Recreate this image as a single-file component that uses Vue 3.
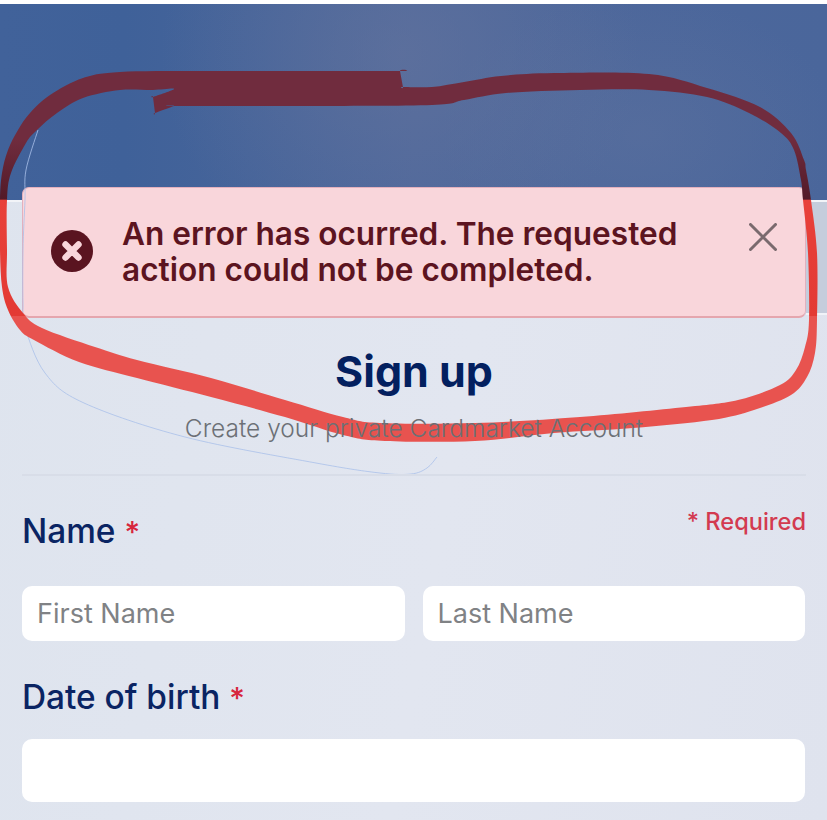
<script setup>
const outer = [[400,71],[400,71],[300,71],[200,71],[120,72],[83,78],[50,95],[30,113],[18,130],[8,150],[2,173],[0,200],[0,250],[2,287],[8,310],[20,330],[34,340],[79,362],[137,378],[211,397],[285,417],[343,435],[385,441],[475,441],[554,433],[633,428],[712,420],[754,410],[791,395],[807,377],[815,353],[817,320],[817,253],[811,200],[806,170],[804,160],[791,133],[760,107],[707,88],[649,74],[554,73],[501,76],[464,82],[432,87],[403,87],[403,87]]
const inner = [[174,89],[153,90],[120,90],[83,98],[57,113],[37,130],[26,143],[11,173],[7,200],[7,250],[8,287],[23,313],[42,328],[95,347],[137,360],[211,378],[285,400],[343,417],[380,423],[475,423],[580,417],[686,407],[738,400],[780,385],[796,370],[805,347],[809,320],[808,253],[803,200],[801,180],[794,150],[781,133],[749,113],[707,97],[649,90],[580,90],[506,93],[464,100],[432,105],[300,106],[174,106],[174,106],[155,113],[155,113],[153,97],[153,97]]
const line = [[38,130],[26,170],[25,200],[23,250],[23,303],[25,327],[45,373],[84,403],[185,437],[316,463],[380,473],[411,474],[427,468],[437,457]]

function smooth(p, closed) {
  const n = p.length
  const at = (i) => closed ? p[(i + n) % n] : p[Math.max(0, Math.min(n - 1, i))]
  let d = `M${p[0][0]} ${p[0][1]}`
  const last = closed ? n : n - 1
  for (let i = 0; i < last; i++) {
    const [a, b, c, e] = [at(i - 1), at(i), at(i + 1), at(i + 2)]
    const c1 = [b[0] + (c[0] - a[0]) / 6, b[1] + (c[1] - a[1]) / 6]
    const c2 = [c[0] - (e[0] - b[0]) / 6, c[1] - (e[1] - b[1]) / 6]
    d += `C${c1[0].toFixed(1)} ${c1[1].toFixed(1)} ${c2[0].toFixed(1)} ${c2[1].toFixed(1)} ${c[0]} ${c[1]}`
  }
  return closed ? d + 'Z' : d
}
const brushPath = smooth(outer, true) + smooth(inner, true)
const penPath = smooth(line, false)
</script>

<template>
  <main class="page">
    <header class="hero"></header>
    <div class="side-shade"></div>

    <section class="alert" role="alert">
      <svg class="alert-icon" viewBox="0 0 42 42" aria-hidden="true">
        <circle cx="21" cy="21" r="21" fill="#5a1420" />
        <path d="M14.5 14.5 27.5 27.5M27.5 14.5 14.5 27.5" stroke="#f9d6db" stroke-width="6.4" stroke-linecap="round" />
      </svg>
      <p class="alert-text">An error has ocurred. The requested action could not be completed.</p>
      <button class="alert-close" aria-label="Close">
        <svg viewBox="0 0 28 28" aria-hidden="true">
          <path d="M1.5 1.5 26.5 26.5M26.5 1.5 1.5 26.5" stroke="#7a6a6e" stroke-width="3" stroke-linecap="round" />
        </svg>
      </button>
    </section>

    <section class="intro">
      <h1 class="title">Sign up</h1>
      <p class="subtitle">Create your private Cardmarket Account</p>
    </section>

    <form class="form" @submit.prevent>
      <div class="label-row">
        <label class="label">Name <span class="star">*</span></label>
        <span class="required">* Required</span>
      </div>
      <div class="name-row">
        <input class="field" type="text" placeholder="First Name" />
        <input class="field" type="text" placeholder="Last Name" />
      </div>
      <label class="label dob-label">Date of birth <span class="star">*</span></label>
      <input class="field dob" type="text" />
    </form>

    <svg class="scribble" viewBox="0 0 827 820" aria-hidden="true">
      <defs>
        <linearGradient id="brush" gradientUnits="userSpaceOnUse" x1="0" y1="0" x2="0" y2="820">
          <stop offset="0.17" stop-color="#702c3e" />
          <stop offset="0.243" stop-color="#521a28" />
          <stop offset="0.2439" stop-color="#e8413a" />
          <stop offset="0.385" stop-color="#e33a34" />
          <stop offset="0.386" stop-color="#e8534f" />
        </linearGradient>
      </defs>
      <path class="pen" :d="penPath" fill="none" />
      <path class="brush" :d="brushPath" fill="url(#brush)" fill-rule="evenodd" />
    </svg>
  </main>
</template>

<style scoped>
.page {
  position: relative;
  width: 827px;
  height: 820px;
  overflow: hidden;
  padding-top: 4px;
  box-sizing: border-box;
  background: linear-gradient(100deg, #dee4ee 0%, #e2e6f0 55%, #dfe3ee 100%);
  background-clip: content-box;
  font-family: Inter, "Liberation Sans", sans-serif;
}
.hero {
  height: 196px;
  border-bottom: 2px solid #f2f4f8;
  background:
    radial-gradient(ellipse 240px 220px at 400px 50px, rgba(104, 118, 158, 0.5), rgba(104, 118, 158, 0) 100%),
    radial-gradient(ellipse 200px 140px at 640px 130px, rgba(100, 118, 160, 0.35), rgba(100, 118, 160, 0) 100%),
    linear-gradient(90deg, #41629a 0%, #3f6199 15%, #4f689b 50%, #4a669b 100%);
}
.side-shade {
  position: absolute;
  top: 202px;
  right: 0;
  width: 21px;
  height: 111px;
  background: #c5cddc;
  border-bottom: 2px solid #f0f3f8;
}
.alert {
  position: relative;
  box-sizing: border-box;
  display: flex;
  align-items: flex-start;
  height: 131px;
  margin: -15px 21px 0 22px;
  padding: 28px 28px 0 28px;
  border: 1px solid #e3b0bd;
  border-bottom: 2px solid #e5a6ae;
  border-radius: 7px;
  background: #f9d6db;
}
.alert-icon {
  flex: none;
  width: 42px;
  height: 42px;
  margin-top: 14px;
}
.alert-text {
  flex: 1;
  margin: 0 0 0 29px;
  font-size: 31.6px;
  line-height: 36px;
  font-weight: 600;
  color: #5c1420;
}
.alert-close {
  flex: none;
  width: 28px;
  height: 28px;
  padding: 0;
  margin: 7px 0 0 0;
  border: 0;
  background: none;
}
.alert-close svg {
  display: block;
  width: 28px;
  height: 28px;
}
.intro {
  position: relative;
  z-index: 3;
  margin: 0 21px 0 22px;
  padding-bottom: 31px;
  border-bottom: 2px solid #d8dde8;
  text-align: center;
}
.title {
  margin: 25px 0 0;
  font-size: 43px;
  line-height: 56px;
  font-weight: 700;
  color: #03205f;
}
.subtitle {
  margin: 14px 0 0;
  font-size: 24.5px;
  line-height: 30px;
  font-weight: 300;
  color: #6c7076;
}
.form {
  margin: 0 22px;
}
.label-row {
  display: flex;
  justify-content: space-between;
  align-items: flex-start;
  margin-top: 33px;
}
.label {
  display: block;
  font-size: 33.4px;
  line-height: 44px;
  font-weight: 500;
  color: #0a2463;
}
.star {
  font-size: 30px;
  color: #d7263d;
}
.required {
  margin-top: -1px;
  margin-right: -1px;
  font-size: 23.6px;
  line-height: 28px;
  font-weight: 500;
  color: #d33a50;
}
.name-row {
  display: grid;
  grid-template-columns: 1fr 1fr;
  gap: 18px;
  margin-top: 32px;
}
.field {
  display: block;
  box-sizing: border-box;
  width: 100%;
  height: 55px;
  padding: 0 15px;
  border: 0;
  border-radius: 10px;
  background: #fff;
  font-family: inherit;
  font-size: 27px;
  font-weight: 400;
  color: #222;
  outline: none;
}
.field::placeholder {
  color: #808285;
  opacity: 1;
}
.dob-label {
  margin-top: 34px;
}
.dob {
  height: 63px;
  margin-top: 19px;
}
.scribble {
  position: absolute;
  top: 0;
  left: 0;
  z-index: 2;
  width: 827px;
  height: 820px;
  pointer-events: none;
}
.pen {
  stroke: #a9c0ea;
  stroke-width: 0.8;
}
.brush {
  filter: blur(0.6px);
}
</style>

<style>
html, body { background: #fff; }
</style>
